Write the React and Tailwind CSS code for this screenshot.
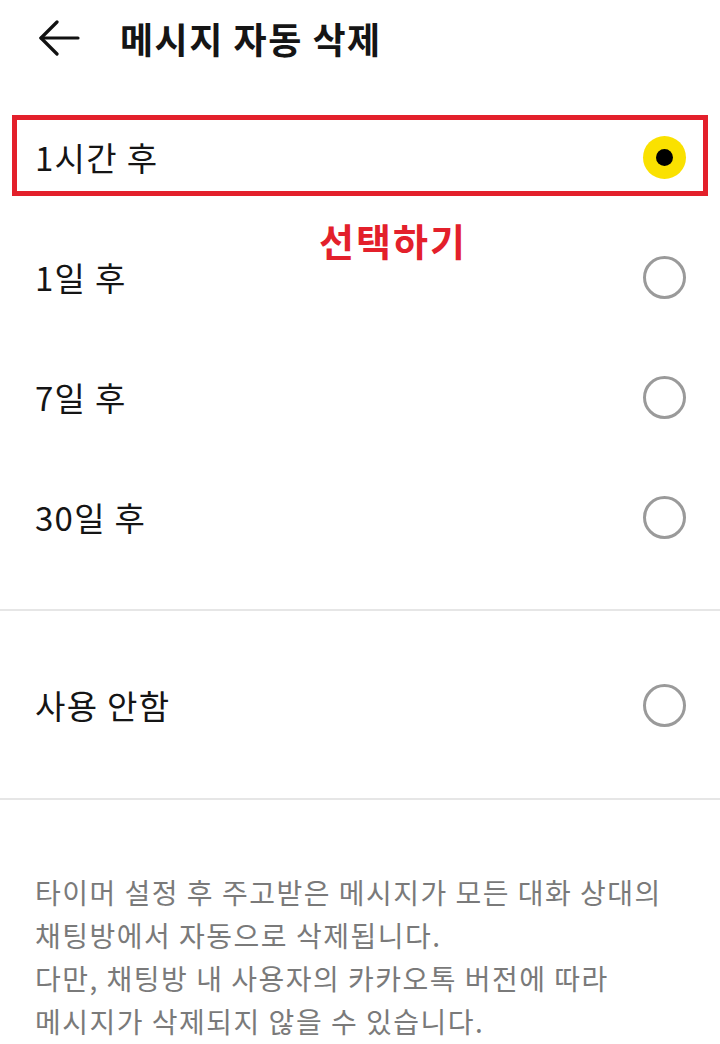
import React from "react";

function Radio({ selected }) {
  if (selected) {
    return (
      <div className="w-[43px] h-[43px] rounded-full bg-[#fae100] flex items-center justify-center shrink-0">
        <div className="w-[17px] h-[17px] rounded-full bg-black" />
      </div>
    );
  }
  return <div className="w-[43px] h-[43px] rounded-full border-[3px] border-[#9a9a9a] shrink-0" />;
}

function Row({ label, selected, children }) {
  return (
    <div className="relative h-[120px] flex items-center justify-between pl-[35px] pr-[34px]">
      <span className="text-[33px] tracking-[1.3px] leading-none text-[#151515]">{label}</span>
      <Radio selected={selected} />
      {children}
    </div>
  );
}

export default function App() {
  return (
    <div className="w-[720px] h-[1044px] bg-white overflow-hidden font-['Noto_Sans_CJK_KR',sans-serif]">
      <div className="h-[75px] flex items-center pl-[38px]">
        <svg width="42" height="36" viewBox="0 0 42 36" fill="none" stroke="#111" strokeWidth="3.2" strokeLinecap="round" strokeLinejoin="round">
          <path d="M40 18H3" />
          <path d="M19 2L3 18L19 34" />
        </svg>
        <span className="ml-[40px] text-[36px] tracking-[1.5px] font-bold leading-none text-[#151515]">메시지 자동 삭제</span>
      </div>

      <div className="pt-[22px] pb-[32px]">
        <Row label="1시간 후" selected>
          <div className="absolute left-[12px] right-[12px] top-[18px] h-[81px] border-[5px] border-[#e3202b] pointer-events-none" />
        </Row>
        <Row label="1일 후">
          <span className="absolute left-[319px] top-[4px] text-[38px] tracking-[2px] font-bold leading-none text-[#e3202b]">선택하기</span>
        </Row>
        <Row label="7일 후" />
        <Row label="30일 후" />
      </div>

      <div className="h-[2px] bg-[#e6e6e6]" />

      <div className="pt-[34px] pb-[33px]">
        <Row label="사용 안함" />
      </div>

      <div className="h-[2px] bg-[#e6e6e6]" />

      <div className="pt-[71px] pl-[35px] text-[28px] tracking-[1.5px] leading-[43px] text-[#7a7a7a] whitespace-nowrap">
        <div>타이머 설정 후 주고받은 메시지가 모든 대화 상대의</div>
        <div>채팅방에서 자동으로 삭제됩니다.</div>
        <div>다만, 채팅방 내 사용자의 카카오톡 버전에 따라</div>
        <div>메시지가 삭제되지 않을 수 있습니다.</div>
      </div>
    </div>
  );
}
